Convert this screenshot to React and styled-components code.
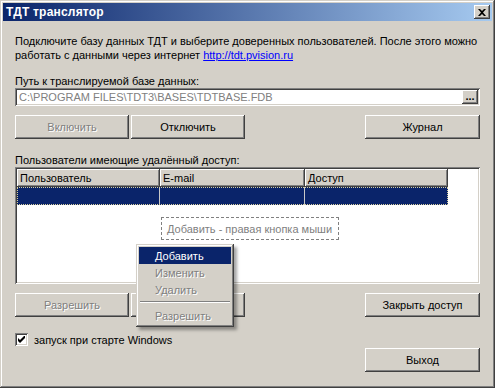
import styled, { createGlobalStyle } from "styled-components";

const GlobalStyle = createGlobalStyle`
  html, body {
    margin: 0;
    padding: 0;
    background: #d4d0c8;
  }
  * {
    box-sizing: border-box;
  }
`;

const raised = `
  box-shadow: inset -1px -1px #404040, inset 1px 1px #ffffff,
    inset -2px -2px #808080, inset 2px 2px #d4d0c8;
`;

const sunken = `
  box-shadow: inset 1px 1px #808080, inset -1px -1px #ffffff,
    inset 2px 2px #404040, inset -2px -2px #d4d0c8;
`;

const Window = styled.div`
  position: relative;
  width: 495px;
  height: 388px;
  padding: 3px;
  background: #d4d0c8;
  font-family: "Liberation Sans", Arial, sans-serif;
  font-size: 11px;
  color: #000;
  box-shadow: inset -1px -1px #404040, inset 1px 1px #d4d0c8,
    inset -2px -2px #808080, inset 2px 2px #ffffff;
`;

const TitleBar = styled.div`
  height: 18px;
  display: flex;
  align-items: center;
  justify-content: space-between;
  padding: 0 2px 0 3px;
  background: linear-gradient(to right, #0a246a, #a6caf0);
`;

const Title = styled.span`
  color: #fff;
  font-weight: bold;
  font-size: 12px;
  letter-spacing: 0.2px;
`;

const CloseButton = styled.div`
  width: 16px;
  height: 14px;
  display: flex;
  align-items: center;
  justify-content: center;
  background: #d4d0c8;
  ${raised}
`;

const Body = styled.div`
  padding: 13px 12px 0 12px;
  display: flex;
  flex-direction: column;
`;

const Text = styled.div`
  line-height: 14px;
  margin-top: ${(p) => p.$top || 0}px;
  white-space: nowrap;
`;

const Link = styled.a`
  color: #0000ff;
  text-decoration: underline;
`;

const PathField = styled.div`
  height: 18px;
  background: #fff;
  display: flex;
  align-items: center;
  padding: 2px 2px 2px 4px;
  ${sunken}
`;

const PathText = styled.span`
  flex: 1;
  color: #808080;
  white-space: nowrap;
`;

const EllipsisButton = styled.div`
  width: 16px;
  height: 14px;
  background: #d4d0c8;
  display: flex;
  align-items: center;
  justify-content: center;
  font-weight: bold;
  font-size: 11px;
  line-height: 8px;
  padding-bottom: 3px;
  ${raised}
`;

const ButtonRow = styled.div`
  display: flex;
  gap: 2px;
  margin-top: ${(p) => p.$top || 0}px;
`;

const Button = styled.div`
  width: ${(p) => p.$width || 114}px;
  height: 24px;
  display: flex;
  align-items: center;
  justify-content: center;
  background: #d4d0c8;
  color: ${(p) => (p.$disabled ? "#808080" : "#000")};
  text-shadow: ${(p) => (p.$disabled ? "1px 1px #ffffff" : "none")};
  margin-left: ${(p) => (p.$right ? "auto" : "0")};
  ${raised}
`;

const ListBox = styled.div`
  height: 117px;
  background: #fff;
  padding: 2px;
  display: flex;
  flex-direction: column;
  ${sunken}
`;

const HeaderRow = styled.div`
  display: flex;
  height: 18px;
`;

const HeaderCell = styled.div`
  width: ${(p) => p.$width}px;
  background: #d4d0c8;
  display: flex;
  align-items: center;
  padding-left: 3px;
  ${raised}
`;

const SelectedRow = styled.div`
  display: flex;
  width: 431px;
  height: 18px;
  background: #0a246a;
  outline: 1px dotted #d8d0a0;
  outline-offset: -1px;
`;

const RowCell = styled.div`
  width: ${(p) => p.$width}px;
  border-right: ${(p) => (p.$last ? "none" : "1px solid #c8c8c8")};
`;

const Hint = styled.div`
  align-self: center;
  margin: 12px 0 0 4px;
  width: 178px;
  height: 23px;
  border: 1px dashed #808080;
  color: #808080;
  display: flex;
  align-items: center;
  justify-content: center;
`;

const CheckRow = styled.label`
  display: flex;
  align-items: center;
  gap: 6px;
  height: 13px;
  margin-top: 16px;
`;

const CheckBox = styled.span`
  width: 13px;
  height: 13px;
  background: #fff;
  display: flex;
  align-items: center;
  justify-content: center;
  ${sunken}
`;

const Menu = styled.div`
  position: absolute;
  left: 136px;
  top: 244px;
  width: 98px;
  padding: 3px;
  background: #d4d0c8;
  box-shadow: inset -1px -1px #404040, inset 1px 1px #d4d0c8,
    inset -2px -2px #808080, inset 2px 2px #ffffff,
    3px 3px 3px rgba(0, 0, 0, 0.35);
`;

const MenuItem = styled.div`
  height: 17px;
  display: flex;
  align-items: center;
  padding-left: 16px;
  background: ${(p) => (p.$active ? "#0a246a" : "transparent")};
  color: ${(p) => (p.$active ? "#fff" : "#808080")};
  text-shadow: ${(p) => (p.$active ? "none" : "1px 1px #ffffff")};
`;

const MenuSeparator = styled.div`
  margin: 3px 1px 4px;
  border-top: 1px solid #808080;
  border-bottom: 1px solid #ffffff;
`;

const columns = [
  { title: "Пользователь", width: 143 },
  { title: "E-mail", width: 145 },
  { title: "Доступ", width: 143 },
];

function App() {
  return (
    <>
      <GlobalStyle />
      <Window>
        <TitleBar>
          <Title>ТДТ транслятор</Title>
          <CloseButton>
            <svg width="8" height="7" viewBox="0 0 8 7">
              <path d="M0 0h2l2 2 2-2h2L5 3.5 8 7H6L4 5 2 7H0l3-3.5z" fill="#000" />
            </svg>
          </CloseButton>
        </TitleBar>
        <Body>
          <Text>
            Подключите базу данных ТДТ и выберите доверенных пользователей. После этого можно
          </Text>
          <Text>
            работать с данными через интернет <Link>http://tdt.pvision.ru</Link>
          </Text>
          <Text $top={12}>Путь к транслируемой базе данных:</Text>
          <PathField>
            <PathText>C:\PROGRAM FILES\TDT3\BASES\TDTBASE.FDB</PathText>
            <EllipsisButton>...</EllipsisButton>
          </PathField>
          <ButtonRow $top={9}>
            <Button $disabled>Включить</Button>
            <Button>Отключить</Button>
            <Button $right $width={115}>Журнал</Button>
          </ButtonRow>
          <Text $top={14}>Пользователи имеющие удалённый доступ:</Text>
          <ListBox>
            <HeaderRow>
              {columns.map((c) => (
                <HeaderCell key={c.title} $width={c.width}>
                  {c.title}
                </HeaderCell>
              ))}
            </HeaderRow>
            <SelectedRow>
              {columns.map((c, i) => (
                <RowCell key={c.title} $width={c.width} $last={i === columns.length - 1} />
              ))}
            </SelectedRow>
            <Hint>Добавить - правая кнопка мыши</Hint>
          </ListBox>
          <ButtonRow $top={9}>
            <Button $disabled>Разрешить</Button>
            <Button />
            <Button $right $width={115}>Закрыть доступ</Button>
          </ButtonRow>
          <CheckRow>
            <CheckBox>
              <svg width="7" height="7" viewBox="0 0 7 7">
                <path d="M0 2v3l2 2 5-5V-1L2 4z" fill="#000" />
              </svg>
            </CheckBox>
            запуск при старте Windows
          </CheckRow>
          <ButtonRow $top={2}>
            <Button $right $width={115}>Выход</Button>
          </ButtonRow>
        </Body>
        <Menu>
          <MenuItem $active>Добавить</MenuItem>
          <MenuItem>Изменить</MenuItem>
          <MenuItem>Удалить</MenuItem>
          <MenuSeparator />
          <MenuItem>Разрешить</MenuItem>
        </Menu>
      </Window>
    </>
  );
}

export default App;
